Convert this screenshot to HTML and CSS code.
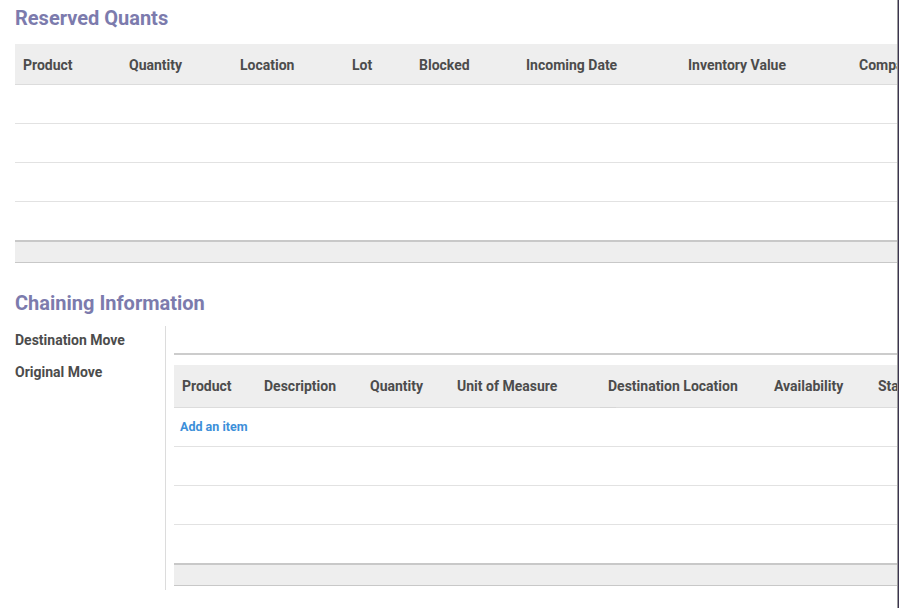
FILE: index.html
```html
<!DOCTYPE html>
<html>
<head>
<meta charset="utf-8">
<link rel="stylesheet" href="styles.css">
</head>
<body>
<div class="frame">
  <div class="sheet">
    <h2 class="sep first">Reserved Quants</h2>
    <div class="tbl-wrap">
      <table class="list q">
        <thead>
          <tr>
            <th class="c1">Product</th><th class="c2">Quantity</th><th class="c3">Location</th><th class="c4">Lot</th><th class="c5">Blocked</th><th class="c6">Incoming Date</th><th class="c7">Inventory Value</th><th class="c8">Company</th>
          </tr>
        </thead>
        <tbody>
          <tr><td colspan="8"></td></tr>
          <tr><td colspan="8"></td></tr>
          <tr><td colspan="8"></td></tr>
          <tr><td colspan="8"></td></tr>
        </tbody>
        <tfoot><tr><td colspan="8"></td></tr></tfoot>
      </table>
    </div>

    <h2 class="sep second">Chaining Information</h2>
    <div class="group">
      <div class="labels">
        <div class="lbl">Destination Move</div>
        <div class="lbl">Original Move</div>
      </div>
      <div class="fields">
        <div class="m2m"></div>
        <table class="list m">
          <thead>
            <tr>
              <th class="d1">Product</th><th class="d2">Description</th><th class="d3">Quantity</th><th class="d4">Unit of Measure<span class="grip"></span></th><th class="d5">Destination Location</th><th class="d6">Availability</th><th class="d7">Status</th>
            </tr>
          </thead>
          <tbody>
            <tr><td colspan="7" class="add"><a class="add-link">Add an item</a></td></tr>
            <tr><td colspan="7"></td></tr>
            <tr><td colspan="7"></td></tr>
            <tr><td colspan="7"></td></tr>
          </tbody>
          <tfoot><tr><td colspan="7"></td></tr></tfoot>
        </table>
      </div>
    </div>
  </div>
  <div class="edge"></div>
</div>
</body>
</html>
```

FILE: styles.css
```css
html, body {
  margin: 0;
  padding: 0;
  background: #fff;
}
body {
  font-family: Roboto, "Noto Sans", sans-serif;
  color: #4c4c4c;
  font-size: 13px;
}
.frame {
  display: flex;
  width: 899px;
  height: 608px;
  overflow: hidden;
}
.sheet {
  width: 882px;
  padding-left: 15px;
  overflow: hidden;
  flex: none;
}
.edge {
  width: 2px;
  flex: none;
  border-left: 1px solid #9a9a9a;
  background: #3b3450;
  box-sizing: border-box;
}
.sep {
  margin: 0;
  font-size: 20px;
  line-height: 24px;
  font-weight: bold;
  color: #7c7bad;
}
.sep.first {
  padding-top: 6px;
  margin-bottom: 14px;
}
.tbl-wrap {
  width: 882px;
  overflow: hidden;
}
table.list {
  border-collapse: collapse;
  table-layout: fixed;
}
table.list th {
  box-sizing: border-box;
  background: #eeeeee;
  text-align: left;
  font-weight: bold;
  font-size: 14px;
  color: #4c4c4c;
  padding: 2px 0 0 8px;
  white-space: nowrap;
  overflow: hidden;
  border-bottom: 1px solid #dcdcdc;
  position: relative;
}
table.list tbody td {
  height: 38px;
  padding: 0;
  border-bottom: 1px solid #e2e2e2;
}
table.list tbody tr:last-child td {
  border-bottom: 2px solid #c8c8c8;
}
table.list tfoot td {
  height: 20px;
  padding: 0;
  background: #eeeeee;
  border-bottom: 1px solid #c8c8c8;
}
table.q { width: 896px; }
table.q th { height: 40px; }
.c1 { width: 106px; }
.c2 { width: 111px; }
.c3 { width: 112px; }
.c4 { width: 67px; }
.c5 { width: 107px; }
.c6 { width: 162px; }
.c7 { width: 171px; }
.c8 { width: 60px; }

.sep.second {
  margin-top: 28px;
  margin-bottom: 11px;
}
.group {
  display: flex;
}
.labels {
  width: 150px;
  flex: none;
  border-right: 1px solid #dcdcdc;
  height: 264px;
}
.lbl {
  font-weight: bold;
  font-size: 14px;
  line-height: 18px;
  color: #4c4c4c;
  margin-top: 5px;
  margin-bottom: 14px;
}
.fields {
  padding-left: 8px;
  width: 723px;
  overflow: hidden;
  flex: none;
}
.m2m {
  height: 27px;
  border-bottom: 2px solid #cccccc;
  margin-bottom: 10px;
}
table.m { width: 760px; }
table.m th { height: 43px; padding-top: 0; }
.d1 { width: 82px; }
.d2 { width: 106px; }
.d3 { width: 87px; }
.d4 { width: 151px; overflow: visible !important; }
.d5 { width: 166px; }
.d6 { width: 104px; }
.d7 { width: 64px; }
.grip {
  position: absolute;
  right: -16px;
  bottom: -1px;
  width: 16px;
  height: 1px;
  background: #d6d6d6;
}
table.list tbody td.add {
  box-sizing: border-box;
  height: 39px;
  padding: 0 0 2px 6px;
  vertical-align: middle;
}
.add-link {
  color: #3c8fd9;
  font-weight: bold;
  font-size: 12.5px;
  cursor: pointer;
}
```
